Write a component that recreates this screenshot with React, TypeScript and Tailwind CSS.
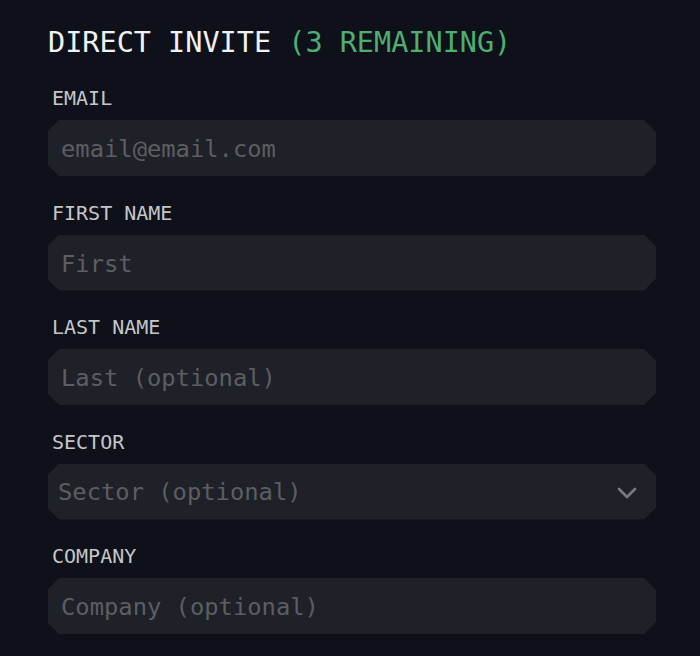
const chamfer = "[clip-path:polygon(11px_0,calc(100%-12px)_0,100%_12px,100%_calc(100%-12px),calc(100%-12px)_100%,11px_100%,0_calc(100%-11px),0_11px)]"

const Field = ({ label, placeholder }: { label: string; placeholder: string }) => (
  <div className="flex flex-col">
    <label className="h-[24px] pl-[4px] text-[20px] leading-[24px] text-[#c5c6c8]">{label}</label>
    <div className={`mt-[10px] h-[56px] bg-[#1f2128] ${chamfer}`}>
      <input
        className="w-full h-full bg-transparent px-[13px] pt-[2px] text-[23.8px] text-[#c5c6c8] placeholder:text-[#5c5e62] outline-none"
        placeholder={placeholder}
      />
    </div>
  </div>
)

export default function App() {
  return (
    <div
      className="w-[700px] h-[656px] bg-[#0e1119] pl-[48px] pr-[44px] pt-[24px] overflow-hidden"
      style={{ fontFamily: '"DejaVu Sans Mono", "Liberation Mono", monospace' }}
    >
      <h2 className="h-[38px] text-[28.5px] leading-[38px] text-[#f1f1f2]">
        DIRECT INVITE <span className="text-[#4fae71]">(3 REMAINING)</span>
      </h2>
      <div className="mt-[24px] flex flex-col gap-[24.5px]">
        <Field label="EMAIL" placeholder="email@email.com" />
        <Field label="FIRST NAME" placeholder="First" />
        <Field label="LAST NAME" placeholder="Last (optional)" />
        <div className="flex flex-col">
          <label className="h-[24px] pl-[4px] text-[20px] leading-[24px] text-[#c5c6c8]">SECTOR</label>
          <div className={`mt-[10px] h-[56px] bg-[#1f2128] ${chamfer} flex items-center justify-between pl-[10px] pr-[19px] pt-[2px]`}>
            <span className="text-[23.8px] text-[#5c5e62]">Sector (optional)</span>
            <svg width="20" height="12" viewBox="0 0 20 12" fill="none">
              <path d="M2 2l8 8 8-8" stroke="#7a7b7e" strokeWidth="2.6" strokeLinecap="round" strokeLinejoin="round" />
            </svg>
          </div>
        </div>
        <Field label="COMPANY" placeholder="Company (optional)" />
      </div>
    </div>
  )
}
